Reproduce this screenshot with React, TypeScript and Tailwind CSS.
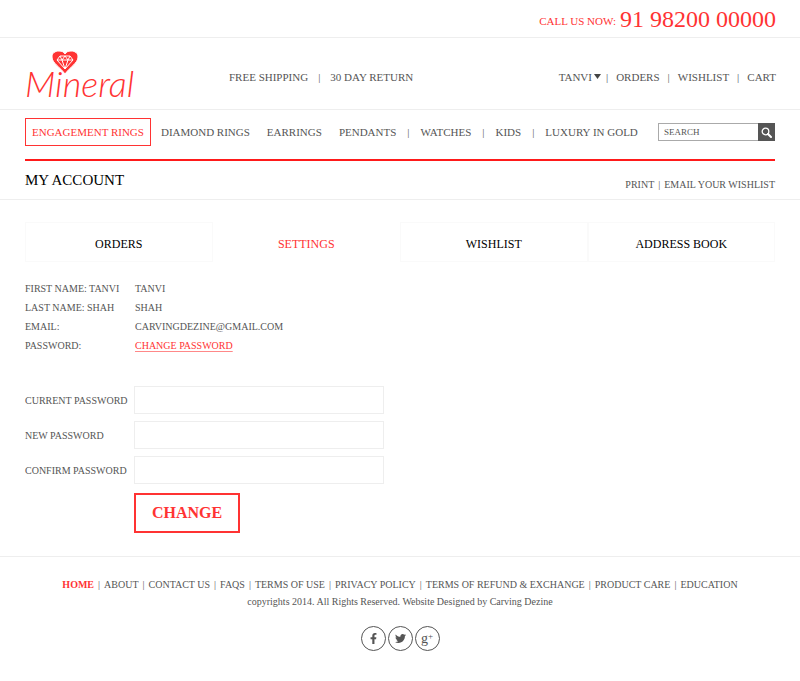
import { clsx } from 'clsx'
import { Fragment, useState } from 'react'
import type { FormEvent, ReactNode } from 'react'
import { FaFacebookF, FaTwitter } from 'react-icons/fa'

const TABS = ['Orders', 'Settings', 'Wishlist', 'Address Book']

const PROFILE = [
  { label: 'First Name: Tanvi', value: 'Tanvi' },
  { label: 'Last Name: Shah', value: 'Shah' },
  { label: 'Email:', value: 'carvingdezine@gmail.com' },
]

const PASSWORD_FIELDS = [
  { id: 'current-password', label: 'Current Password' },
  { id: 'new-password', label: 'New Password' },
  { id: 'confirm-password', label: 'Confirm Password' },
]

const FOOTER_LINKS = [
  'Home',
  'About',
  'Contact Us',
  'FAQs',
  'Terms of Use',
  'Privacy Policy',
  'Terms of Refund & Exchange',
  'Product Care',
  'Education',
]

function Logo() {
  return (
    <a href="#" aria-label="Mineral" className="block normal-case">
      <svg width="112" height="60" viewBox="0 0 112 60" className="block overflow-visible fill-[#ff3333]">
        <text
          x="1"
          y="51"
          className="font-['Lato',sans-serif] text-[36px] font-light italic"
        >
          Mineral
        </text>
        <path
          d="M41 28C36 21 28 17 28 11C28 7 31 5 35 5C38 5 40 6 41 8C42 6 44 5 47 5C51 5 54 7 54 11C54 17 46 21 41 28Z"
          stroke="#fff"
        />
        <path
          d="M36 10H46L49 14L41 23L33 14ZM33 14H49M36 10L38 14L41 10L44 14L46 10M38 14L41 23L44 14"
          fill="none"
          stroke="#fff"
          strokeLinejoin="round"
        />
      </svg>
    </a>
  )
}

function NavLink({ children }: { children: ReactNode }) {
  return (
    <a href="#" className="whitespace-nowrap hover:text-[#ff3333]">
      {children}
    </a>
  )
}

function SocialLink({ label, children }: { label: string, children: ReactNode }) {
  return (
    <a
      href="#"
      aria-label={label}
      className="flex size-[25px] items-center justify-center rounded-full border border-[#555] text-[#555]"
    >
      {children}
    </a>
  )
}

export default function App() {
  const [activeTab, setActiveTab] = useState('Settings')

  const handleSubmit = (event: FormEvent) => {
    event.preventDefault()
  }

  return (
    <div className="bg-white font-['Liberation_Serif',serif] text-[10px] leading-4 text-[#555]">
      <div className="flex h-[38px] items-center justify-end gap-1 border-b border-[#eee] px-6 text-[#ff3333] uppercase">
        <span className="pt-1 text-[11px]">Call us now:</span>
        <a href="tel:919820000000" className="text-2xl">91 98200 00000</a>
      </div>

      <header className="flex h-[72px] items-center justify-between border-b border-[#eee] px-6 pt-1 text-[11px] uppercase">
        <div className="flex items-center gap-[93px]">
          <Logo />
          <p className="flex gap-[10px] pt-0.5 whitespace-nowrap">
            <span>Free Shipping</span>
            <span>|</span>
            <span>30 Day Return</span>
          </p>
        </div>
        <nav aria-label="Account" className="flex items-center gap-2 pt-0.5">
          <div className="flex items-center gap-[5px]">
            <button type="button" className="flex items-center gap-0.5 uppercase">
              Tanvi
              <svg width="7" height="5" viewBox="0 0 7 5" className="fill-[#444]">
                <path d="M0 0H7L3.500 5Z" />
              </svg>
            </button>
            <span>|</span>
          </div>
          <NavLink>Orders</NavLink>
          <span>|</span>
          <NavLink>Wishlist</NavLink>
          <span>|</span>
          <NavLink>Cart</NavLink>
        </nav>
      </header>

      <main>
        <div className="mx-[25px] flex items-center justify-between border-b-2 border-[#ff1a1a] pt-2 pb-[13px] text-[11px] uppercase">
          <nav aria-label="Categories" className="flex items-center">
            <a
              href="#"
              className="flex h-7 items-center border border-[#ff3333] px-[6px] whitespace-nowrap text-[#ff3333]"
            >
              Engagement Rings
            </a>
            <div className="flex items-center gap-[17px] pl-[10px]">
              <NavLink>Diamond Rings</NavLink>
              <NavLink>Earrings</NavLink>
              <div className="flex items-center gap-[11px]">
                <NavLink>Pendants</NavLink>
                <span>|</span>
                <NavLink>Watches</NavLink>
                <span>|</span>
                <NavLink>Kids</NavLink>
                <span>|</span>
                <NavLink>Luxury in Gold</NavLink>
              </div>
            </div>
          </nav>
          <form role="search" onSubmit={handleSubmit} className="flex h-[18px] w-[117px]">
            <input
              type="search"
              aria-label="Search"
              placeholder="SEARCH"
              className="min-w-0 flex-1 border border-r-0 border-[#aaa] px-[5px] text-[9px] outline-none placeholder:text-[#555]"
            />
            <button
              type="submit"
              aria-label="Search"
              className="flex w-[17px] items-center justify-center bg-[#555]"
            >
              <svg width="11" height="11" viewBox="0 0 11 11" fill="none" stroke="#fff">
                <circle cx="4.500" cy="4.500" r="3.300" strokeWidth="1.300" />
                <path d="M7 7L10 10" strokeWidth="2" strokeLinecap="round" />
              </svg>
            </button>
          </form>
        </div>

        <div className="flex h-[39px] items-center justify-between border-b border-[#eee] px-[25px] uppercase">
          <h1 className="text-[15px] text-black">My Account</h1>
          <p className="flex gap-1 pt-[10px]">
            <NavLink>Print</NavLink>
            <span>|</span>
            <NavLink>Email your wishlist</NavLink>
          </p>
        </div>

        <section className="px-[25px] pt-[22px] pb-[23px] uppercase">
          <div role="tablist" className="grid grid-cols-4 text-xs">
            {TABS.map(tab => (
              <button
                key={tab}
                type="button"
                role="tab"
                aria-selected={tab === activeTab}
                className={clsx(
                  'flex h-10 items-center justify-center border pt-1 uppercase',
                  tab === activeTab ? 'border-transparent text-[#ff3333]' : 'border-[#fafafa] text-black',
                )}
                onClick={() => setActiveTab(tab)}
              >
                {tab}
              </button>
            ))}
          </div>

          <dl className="grid grid-cols-[110px_1fr] gap-y-[3px] pt-[19px]">
            {PROFILE.map(row => (
              <Fragment key={row.label}>
                <dt>{row.label}</dt>
                <dd>{row.value}</dd>
              </Fragment>
            ))}
            <dt>Password:</dt>
            <dd>
              <a href="#" className="text-[#ff3333] underline decoration-[#ff8888] underline-offset-2">
                Change Password
              </a>
            </dd>
          </dl>

          <form onSubmit={handleSubmit} className="flex flex-col gap-[7px] pt-8">
            {PASSWORD_FIELDS.map(field => (
              <div key={field.id} className="flex items-center">
                <label htmlFor={field.id} className="w-[109px] pt-0.5 whitespace-nowrap">{field.label}</label>
                <input
                  id={field.id}
                  type="password"
                  className="h-7 w-[250px] border border-[#eee] px-2 outline-none focus:border-[#ff3333]"
                />
              </div>
            ))}
            <button
              type="submit"
              className="mt-0.5 ml-[109px] h-10 self-start border-2 border-[#ff3333] px-4 text-base font-bold text-[#ff3333] uppercase"
            >
              Change
            </button>
          </form>
        </section>
      </main>

      <footer className="flex flex-col items-center gap-px border-t border-[#eee] px-6 pt-5 pb-[30px]">
        <ul className="flex flex-wrap justify-center gap-x-1 uppercase">
          {FOOTER_LINKS.map((link, index) => (
            <li key={link} className="flex gap-1">
              {index > 0 && <span>|</span>}
              <a href="#" className={clsx(index === 0 && 'font-bold text-[#ff3333]')}>{link}</a>
            </li>
          ))}
        </ul>
        <p>copyrights 2014. All Rights Reserved. Website Designed by Carving Dezine</p>
        <div className="flex gap-0.5 pt-[15px]">
          <SocialLink label="Facebook">
            <FaFacebookF size={11} />
          </SocialLink>
          <SocialLink label="Twitter">
            <FaTwitter size={11} />
          </SocialLink>
          <SocialLink label="Google Plus">
            <span className="text-sm leading-none">g</span>
            <span className="pb-1 text-[9px] leading-none">+</span>
          </SocialLink>
        </div>
      </footer>
    </div>
  )
}
